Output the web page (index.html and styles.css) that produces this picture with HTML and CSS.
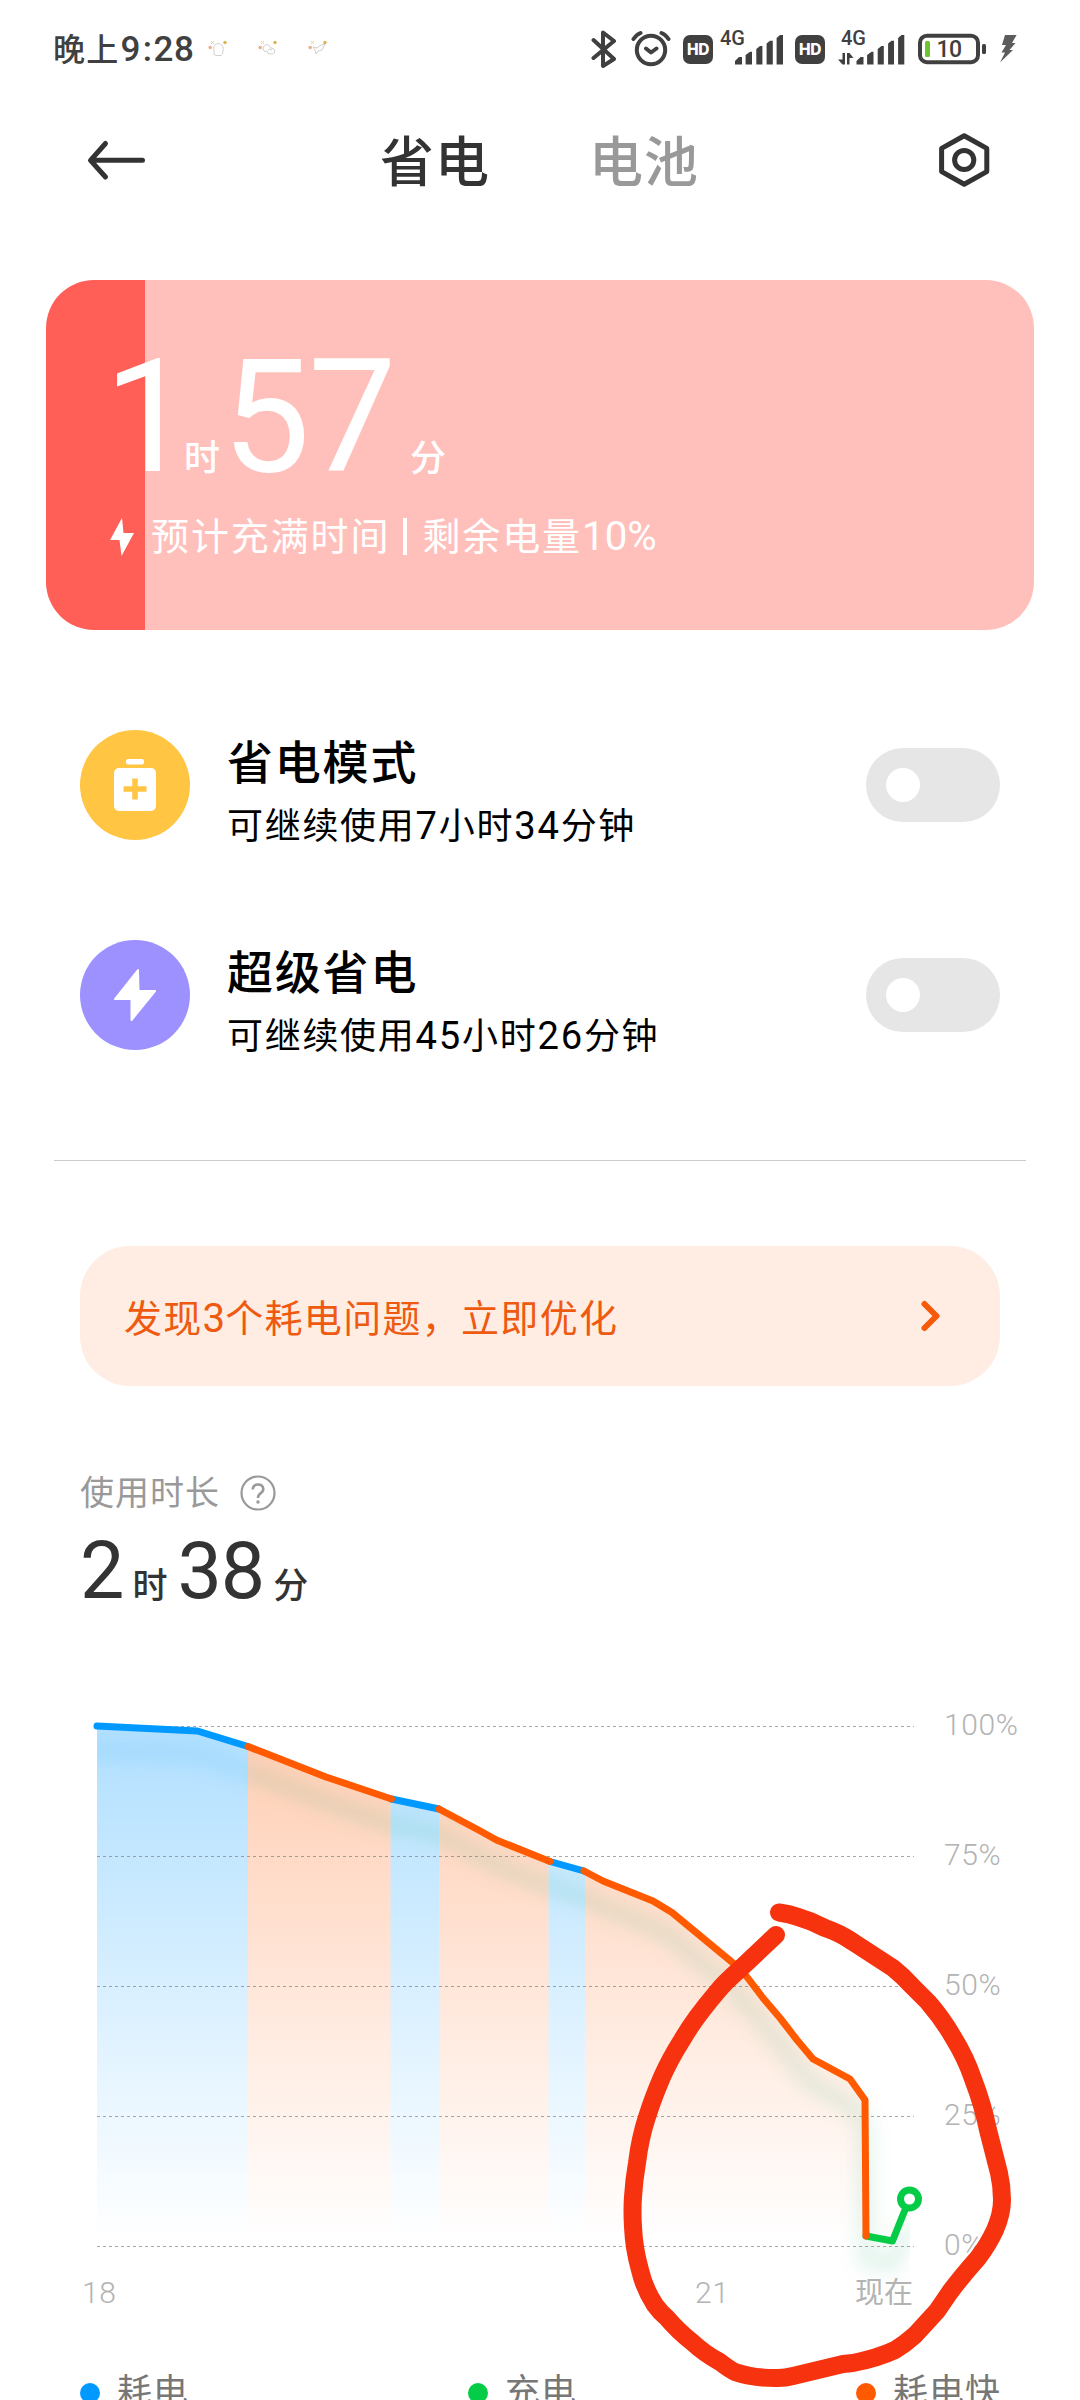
FILE: index.html
```html
<!DOCTYPE html>
<html lang="zh-CN">
<head>
<meta charset="utf-8">
<title>省电</title>
<link rel="stylesheet" href="styles.css">
</head>
<body>
<div class="screen">
  <header class="status">
    <span class="clock">晚上<span class="clock-num">9<span class="colon">:</span>28</span></span>
    <span class="notices">
      <svg width="20" height="18" viewBox="0 0 20 18"><g fill="none" stroke="#c9c9c9" stroke-width=".9"><path d="M6 12C5 7 7 5 10 4.500C14 5 16 8 15 12Q15 16 13 16.500H8Q5 16 6 12Z"/></g><circle cx="2.200" cy="8.500" r="1.800" fill="#e8b08f"/><path d="M3 2l3 3M6 2L3 5" stroke="#ecd27c"/><circle cx="17" cy="3.500" r="1.700" fill="#d9b45a"/></svg>
      <svg width="20" height="18" viewBox="0 0 20 18"><g fill="none" stroke="#c9c9c9" stroke-width=".9"><path d="M5 10Q6 5 10 5.500L13 9Q17 9 17 13Q15 16 10 14.500L9 12Q6 14 5 10ZM10 11Q12 9 14 11"/></g><circle cx="2.200" cy="8.500" r="1.800" fill="#e8b08f"/><path d="M3 2l3 3M6 2L3 5" stroke="#ecd27c"/><circle cx="17" cy="3.500" r="1.700" fill="#d9b45a"/></svg>
      <svg width="20" height="18" viewBox="0 0 20 18"><g fill="none" stroke="#c9c9c9" stroke-width=".9"><path d="M5 8L9 9L13 6L17 5L14 11L10 12L8 15L7 11Z"/></g><circle cx="2.200" cy="8.500" r="1.800" fill="#e8b08f"/><path d="M3 2l3 3M6 2L3 5" stroke="#ecd27c"/><circle cx="17" cy="3.500" r="1.700" fill="#d9b45a"/></svg>
    </span>
    <svg class="bt" width="26" height="42" viewBox="591 28 26 42"><path d="M593.500 40L614 59L603 66V32.500L614 41L593.500 58" fill="none" stroke="#404040" stroke-width="4" stroke-linejoin="round" stroke-linecap="round"/></svg>
    <svg class="alarm" width="40" height="42" viewBox="630.500 29 40 42"><g fill="none" stroke="#404040" stroke-width="4" stroke-linecap="round" stroke-linejoin="round"><circle cx="650.500" cy="50" r="14.200"/><path d="M645.500 48.500L650.500 52.500L656 48.500M633 39Q636 34.500 640 33M668 39Q665 34.500 661 33"/></g></svg>
    <span class="hd hd-a">HD</span>
    <svg class="signal" width="64" height="46" viewBox="720 21 64 46"><text x="720" y="45" class="net">4G</text><path fill="#404040" d="M735 64.500V61L739 57H742V64.500ZM745.600 64.500V55L750 51.700H752V64.500ZM756.300 64.500V49L760 46H762.400V64.500ZM766.600 64.500V43.500L770 40.700H772.800V64.500ZM776.600 64.500V38L780 35H783V64.500Z"/></svg>
    <span class="hd hd-b">HD</span>
    <svg class="signal signal-data" width="67" height="46" viewBox="837.500 21 67 46"><text x="840.500" y="45" class="net">4G</text><path fill="#404040" d="M842 53H844.500V64.500H842L837.500 59.500H842ZM846.500 53H849L853 58H849V64.500H846.500ZM856 64.500V61L860 57H863V64.500ZM866.600 64.500V55L871 51.700H873V64.500ZM877.200 64.500V49L881 46H883.300V64.500ZM887.600 64.500V43.500L891 40.700H893.500V64.500ZM897.600 64.500V38L901 35H903.800V64.500Z"/></svg>
    <svg class="battery" width="70" height="32" viewBox="917 33 70 32"><rect x="920" y="35.700" width="58" height="26.500" rx="7" fill="none" stroke="#404040" stroke-width="4"/><rect x="982" y="44" width="4" height="10" rx="1.500" fill="#404040"/><rect x="925" y="41" width="5" height="16" rx="1.500" fill="#6cc52c"/><text x="949" y="57.300" text-anchor="middle" class="level">10</text></svg>
    <svg class="charge" width="18" height="30" viewBox="1000 34 18 30"><path fill="#5c5c5c" d="M1005 35H1016.600L1012 43H1015.500L1009.500 50H1013L1000 62.600L1005 52.500H1001.500L1006 45H1002Z"/></svg>
  </header>

  <nav class="topbar">
    <svg class="back" width="60" height="44" viewBox="87 138 60 44"><path d="M142.500 160.300H91M105.500 143.500L90.500 160.300L105.500 177" fill="none" stroke="#333" stroke-width="5" stroke-linecap="round" stroke-linejoin="round"/></svg>
    <h1 class="tab">省电</h1>
    <span class="tab tab-off">电池</span>
    <svg class="gear" width="52" height="56" viewBox="938 132 52 56"><g fill="none" stroke="#333" stroke-width="5" stroke-linejoin="round"><path d="M964.200 135.800L986.800 148.400V171.600L964.200 184.200L941.600 171.600V148.400Z"/><circle cx="964.200" cy="160" r="9.600"/></g></svg>
  </nav>

  <section class="charge-card">
    <div class="eta"><b class="eta-n eta-h">1</b><span class="unit unit-h">时</span><b class="eta-n eta-m">57</b><span class="unit unit-m">分</span></div>
    <div class="eta-note">
      <svg width="25" height="40" viewBox="0 0 25 40"><path fill="#fff" d="M13 1L1 23H10.500L12.500 39L25 16H14.500Z"/></svg>
      <span>预计充满时间<i class="bar"></i>剩余电量<span class="num">10%</span></span>
    </div>
  </section>

  <section class="modes">
    <div class="mode">
      <svg class="mode-icon" width="110" height="110" viewBox="0 0 110 110"><circle cx="55" cy="55" r="55" fill="#ffc543"/><rect x="46" y="29" width="18" height="5.500" rx="2" fill="#fff"/><rect x="34" y="38" width="42" height="43" rx="5" fill="#fff"/><path d="M55 48.500V69.500M43.500 59H66.500" stroke="#ffc543" stroke-width="5.500"/></svg>
      <div class="mode-text"><h2>省电模式</h2><p>可继续使用<span class="num">7</span>小时<span class="num">34</span>分钟</p></div>
      <span class="toggle"></span>
    </div>
    <div class="mode">
      <svg class="mode-icon" width="110" height="110" viewBox="0 0 110 110"><circle cx="55" cy="55" r="55" fill="#9c91ff"/><path d="M58 30L35 59H51.500V80L75 51H58.500Z" fill="#fff" stroke="#fff" stroke-width="2" stroke-linejoin="round"/></svg>
      <div class="mode-text"><h2>超级省电</h2><p>可继续使用<span class="num">45</span>小时<span class="num">26</span>分钟</p></div>
      <span class="toggle"></span>
    </div>
  </section>

  <hr class="divider">

  <section class="banner">
    <span>发现<span class="num">3</span>个耗电问题，立即优化</span>
    <svg width="24" height="36" viewBox="0 0 24 36"><path d="M5.500 6L17.500 18L5.500 30" fill="none" stroke="#f55a0a" stroke-width="6" stroke-linecap="round" stroke-linejoin="round"/></svg>
  </section>

  <section class="usage">
    <div class="usage-label">使用时长
      <svg width="36" height="36" viewBox="0 0 36 36"><g fill="none" stroke="#999" stroke-width="2.200"><circle cx="18" cy="18" r="16.500"/><path d="M12.700 14.500Q13 9.500 18 9.500T23.300 14Q23.300 16.500 20.500 18.300Q18 20 18 23" stroke-width="2.600"/></g><circle cx="18" cy="27" r="1.700" fill="#999"/></svg>
    </div>
    <div class="usage-time"><b>2</b><span class="u-h">时</span><b>38</b><span class="u-m">分</span></div>
  </section>

  <svg class="chart" width="1080" height="640" viewBox="0 1690 1080 640">
    <defs>
      <linearGradient id="blue" gradientUnits="userSpaceOnUse" x1="0" y1="1726" x2="0" y2="2240"><stop offset="0" stop-color="#0099ff" stop-opacity=".31"/><stop offset="1" stop-color="#0099ff" stop-opacity="0"/></linearGradient>
      <linearGradient id="orange" gradientUnits="userSpaceOnUse" x1="0" y1="1726" x2="0" y2="2240"><stop offset="0" stop-color="#ff5a00" stop-opacity=".3"/><stop offset="1" stop-color="#ff5a00" stop-opacity="0"/></linearGradient>
      <filter id="soft" filterUnits="userSpaceOnUse" x="50" y="1690" width="920" height="640"><feGaussianBlur stdDeviation="9"/></filter>
      <clipPath id="plot"><rect x="97" y="1700" width="813" height="620"/></clipPath>
    </defs>
    <path fill="url(#blue)" d="M97 1726L197.500 1731L248 1746.500V2246H97ZM390.500 1799L439.500 1809V2246H390.500ZM548.500 1861L585 1871V2246H548.500Z"/>
    <path fill="url(#orange)" d="M248 1746.500L326 1777L390.500 1799V2246H248ZM439.500 1809L478.500 1830L496.500 1840L548.500 1861V2246H439.500ZM585 1871L603 1881L653 1901L672 1912.500L733 1963L747 1977L763 1998L780 2018L797 2040L813 2059L850 2079L865 2100L866 2246H585Z"/>
    <g clip-path="url(#plot)"><g filter="url(#soft)" fill="none" stroke-width="15">
      <path stroke="#0090f0" stroke-opacity=".1" d="M80 1750L197 1755L248 1772"/>
      <path stroke="#10a050" stroke-opacity=".12" d="M248 1772L326 1802L390 1824L439 1834L496 1865L550 1887L584 1897L603 1907L653 1927L672 1938L733 1989L763 2024L797 2066L813 2085L850 2105L865 2126L866 2260L892 2265L909 2224"/>
    </g></g>
    <path d="M97 1726.500H914M97 1856.500H914M97 1986.500H914M97 2116.500H914M97 2246.500H914" stroke="#6e6e6e" stroke-opacity=".6" stroke-width="1" stroke-dasharray="3 3"/>
    <g fill="none" stroke-width="7" stroke-linecap="round" stroke-linejoin="round">
      <path stroke="#05cc47" d="M866 2236L892.500 2241L902.500 2216L909.500 2199"/>
      <path stroke="#0099ff" d="M97 1726L197.500 1731L248 1746.500M391.500 1799L439 1809M550 1861.500L584 1871"/>
      <path stroke="#ff5a00" d="M248 1746.500L326 1777L391.500 1799M439 1809L478.500 1830L496.500 1840L550 1861.500M584 1871L603 1881L653 1901L672 1912.500L733 1963L747 1977L763 1998L780 2018L797 2040L813 2059L850 2079L865 2100L866 2236"/>
    </g>
    <circle cx="909.500" cy="2199" r="9" fill="#fff" stroke="#05cc47" stroke-width="7"/>
    <g class="axis">
      <text x="944" y="1735">100%</text><text x="944" y="1865">75%</text><text x="944" y="1995">50%</text><text x="944" y="2125">25%</text><text x="944" y="2255">0%</text>
      <text x="82" y="2303">18</text><text x="695" y="2303">21</text><text x="855" y="2303" class="now">现在</text>
    </g>
  </svg>

  <footer class="legend">
    <span class="key"><i class="dot dot-use"></i>耗电</span>
    <span class="key"><i class="dot dot-charge"></i>充电</span>
    <span class="key"><i class="dot dot-fast"></i>耗电快</span>
  </footer>

  <svg class="marker" width="1080" height="2400" viewBox="0 0 1080 2400"><path fill="none" stroke="#f6320f" stroke-width="18" stroke-linecap="round" stroke-linejoin="round" d="M779 1912.500Q790 1914 798 1917Q812 1921 825 1928Q840 1933 853 1942L893 1968Q903 1976 912 1986L928 2002Q942 2018 953 2037Q966 2058 973 2079Q983 2105 988 2130L999 2173Q1002 2186 1002 2200Q1002 2214 995 2230Q988 2245 978 2258Q962 2276 950 2292L937 2311L915 2335Q905 2344 895 2350Q878 2358 853 2363L843 2364L793 2376Q784 2378.500 775 2378Q752 2378 735 2372Q729 2369 720 2362Q705 2354 692 2342Q678 2331 667 2318Q660 2312 655 2305Q644 2288 640 2270Q634 2249 633 2227Q632 2210 633 2197Q634 2180 637 2163Q640 2138 647 2117Q653 2098 662 2077Q670 2059 682 2040Q694 2019 717 1992Q724 1983 740 1969L776 1935"/></svg>
</div>
</body>
</html>
```

FILE: styles.css
```css
* { box-sizing: border-box; margin: 0; padding: 0; }
body {
  background: #fff;
  font-family: Roboto, "Noto Sans CJK SC", sans-serif;
  color: #333;
}
svg { display: block; flex: none; }
i { font-style: normal; }
.screen {
  position: relative;
  width: 1080px;
  height: 2400px;
  overflow: hidden;
  display: flex;
  flex-direction: column;
}
.screen > * { flex: none; }

.status { height: 100px; display: flex; align-items: center; padding-left: 53px; color: #404040; }
.clock { width: 155px; font-size: 32px; line-height: 40px; font-weight: 500; letter-spacing: 1.200px; white-space: nowrap; }
.clock-num { font-size: 35px; letter-spacing: .5px; margin-left: 1px; }
.colon { margin: 0 1px 0 2px; }
.notices { display: flex; gap: 30px; width: 383px; padding-bottom: 4px; }
.bt { margin-top: -2px; }
.alarm { margin-left: 13.500px; }
.hd {
  width: 30px; height: 29px; border-radius: 7px; background: #404040; color: #fff;
  font: 800 15.500px/29px Inter, sans-serif; letter-spacing: -.3px; text-align: center; margin-top: -2px;
}
.hd-a { margin-left: 12.500px; }
.signal { margin: -12px 0 0 7px; }
.hd-b { margin-left: 11px; }
.signal-data { margin-left: 12.500px; }
.net { font: 500 20px Roboto, sans-serif; fill: #404040; }
.battery { margin: -2px 0 0 12.500px; }
.level { font: 500 23px Roboto, sans-serif; fill: #404040; letter-spacing: -.5px; }
.charge { margin: -2px 0 0 13px; }

.topbar { height: 120px; display: flex; align-items: center; padding-left: 87px; }
.tab { font-size: 54px; line-height: 70px; font-weight: 500; letter-spacing: 1px; width: 110px; white-space: nowrap; margin: 8px 0 0 233px; }
.tab-off { color: #999; margin-left: 99px; }
.gear { margin-left: 239px; }

.charge-card {
  margin: 60px 46px 0;
  height: 350px;
  border-radius: 48px;
  background: linear-gradient(90deg, #ff5f57 0 99px, #ffc0bb 99px);
  color: #fff;
  padding: 77px 0 0 63px;
}
.eta { display: flex; align-items: baseline; height: 120px; line-height: 120px; }
.eta-n { font-size: 157px; font-weight: 400; letter-spacing: -2px; }
.eta-h { width: 74px; margin-left: -5px; }
.eta-m { width: 178px; }
.unit { font-size: 36px; font-weight: 500; }
.unit-h { width: 38px; margin-left: 6px; }
.unit-m { margin-left: 10px; }
.eta-note { display: flex; align-items: center; gap: 17px; margin-top: 35px; height: 50px; font-size: 38px; line-height: 50px; letter-spacing: 1.900px; white-space: nowrap; }
.bar { display: inline-block; width: 4px; height: 37px; background: #fff; margin: 0 15px 0 13px; vertical-align: -5px; }
.num { font-size: 1.060em; letter-spacing: 0; }

.modes { margin: 100px 80px 0; display: flex; flex-direction: column; gap: 100px; color: #000; }
.mode { display: flex; height: 110px; }
.mode-text { flex: 1; padding: 3px 0 0 37px; }
.mode h2 { font-size: 46px; line-height: 60px; font-weight: 500; letter-spacing: 1.800px; }
.mode p { font-size: 36px; line-height: 48px; margin-top: 9px; letter-spacing: 1.700px; white-space: nowrap; }
.mode .num { letter-spacing: 1.800px; }
.toggle { align-self: center; width: 134px; height: 74px; border-radius: 37px; background: #e6e6e6; padding: 20px; }
.toggle::before { content: ""; display: block; width: 34px; height: 34px; border-radius: 50%; background: #fff; }

.divider { margin: 110px 54px 0; border: 0; height: 1px; background: #ccc; }

.banner {
  margin: 85px 80px 0; height: 140px; border-radius: 50px; background: #ffede4; color: #ee5a10;
  display: flex; align-items: center; justify-content: space-between; padding: 0 57px 1px 44px;
  font-size: 38px; letter-spacing: 1.300px;
}

.usage { margin: 87px 80px 0; }
.usage-label { display: flex; align-items: center; gap: 20px; height: 40px; line-height: 37px; font-size: 34px; letter-spacing: 1px; color: #999; }
.usage-label svg { margin-top: -1px; }
.usage-time { display: flex; align-items: baseline; margin-top: 18px; height: 80px; line-height: 80px; }
.usage-time b { font-size: 79px; font-weight: 400; letter-spacing: -1px; }
.usage-time span { font-size: 35px; font-weight: 500; }
.u-h { width: 45px; margin-left: 9px; }
.u-m { margin-left: 9px; }

.chart { margin-top: 79px; }
.axis { font-size: 30px; fill: #b3b3b3; font-weight: 300; letter-spacing: .6px; }
.axis .now { font-size: 29px; font-weight: 400; letter-spacing: 0; }

.legend { display: flex; margin-top: 42px; padding-left: 80px; font-size: 35px; line-height: 42px; letter-spacing: 1px; color: #777; }
.key { flex: none; width: 388px; display: flex; align-items: center; gap: 17px; white-space: nowrap; }
.dot { width: 20px; height: 20px; border-radius: 50%; }
.dot-use { background: #0099ff; }
.dot-charge { background: #05cc47; }
.dot-fast { background: #ff5a00; }

.marker { position: absolute; left: 0; top: 0; }
```
